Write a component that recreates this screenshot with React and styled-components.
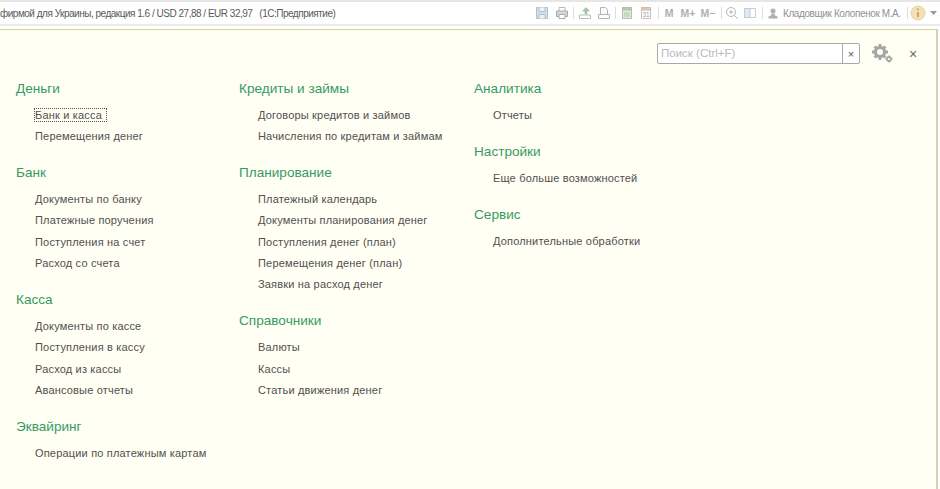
import React from "react";
import styled, { createGlobalStyle } from "styled-components";

const GlobalStyle = createGlobalStyle`
  html, body {
    margin: 0;
    padding: 0;
    background: #fff;
  }
  #root {
    width: 940px;
    height: 489px;
    overflow: hidden;
  }
`;

const Page = styled.div`
  width: 940px;
  height: 489px;
  display: flex;
  flex-direction: column;
  font-family: "Liberation Sans", Arial, sans-serif;
  background: #fff;
`;

const TitleBar = styled.div`
  flex: none;
  padding-bottom: 3px;
  background: #fff;
`;

const TitleRow = styled.div`
  height: 26px;
  display: flex;
  align-items: center;
  box-sizing: border-box;
  background: #fff;
  border-top: 2px solid #e6e6e6;
  border-bottom: 2px solid #ececec;
`;

const TitleText = styled.div`
  flex: 1;
  font-size: 10px;
  letter-spacing: -0.49px;
  color: #5a5a5a;
  white-space: nowrap;
  overflow: hidden;
`;

const Tools = styled.div`
  display: flex;
  align-items: center;
  flex: none;
  padding-right: 3px;
`;

const Slot = styled.span`
  display: flex;
  justify-content: center;
  flex: none;
  margin-left: ${(p) => p.$ml}px;
  width: ${(p) => p.$w || 14}px;
`;

const Sep = styled.span`
  flex: none;
  width: 1px;
  height: 12px;
  margin-left: ${(p) => p.$ml}px;
  background: #dcdcdc;
`;

const MemBtn = styled(Slot)`
  font-size: 10.5px;
  font-weight: bold;
  color: #b0b0b0;
`;

const UserName = styled(Slot)`
  font-size: 10px;
  letter-spacing: -0.4px;
  color: #929292;
  white-space: nowrap;
  justify-content: flex-start;
`;

const Main = styled.div`
  flex: 1;
  position: relative;
  border-top: 1px solid #d9cf98;
  border-right: 2px solid #d4d4b4;
  margin-right: 2px;
  padding-top: 48.5px;
  display: flex;
  background: #fffff3;
  min-height: 0;
`;

const SearchRow = styled.div`
  position: absolute;
  top: 13px;
  left: 657px;
  display: flex;
  align-items: center;
`;

const SearchBox = styled.div`
  width: 203px;
  height: 21px;
  display: flex;
  box-sizing: border-box;
  border: 1px solid #a9a9a9;
  border-radius: 2px;
  background: #fff;
`;

const SearchInput = styled.div`
  flex: 1;
  font-size: 11.5px;
  line-height: 19px;
  padding-left: 3px;
  color: #bababa;
`;

const SearchClear = styled.div`
  width: 16px;
  border-left: 1px solid #a9a9a9;
  display: flex;
  align-items: center;
  justify-content: center;
  font-size: 11px;
  color: #555;
`;

const GearWrap = styled.div`
  margin-left: 12px;
  width: 22px;
  height: 20px;
`;

const CloseX = styled.div`
  margin-left: 15px;
  font-size: 14px;
  color: #666;
`;

const Column = styled.div`
  width: ${(p) => p.$w}px;
  padding-left: ${(p) => p.$pl}px;
  box-sizing: border-box;
  flex: none;
`;

const Section = styled.div`
  margin-bottom: 16px;
`;

const Heading = styled.div`
  font-size: 13.6px;
  line-height: 20px;
  color: #379a63;
  margin-bottom: 6px;
`;

const Item = styled.div`
  font-size: 11px;
  line-height: 21.25px;
  color: #505050;
  padding-left: 19px;
  white-space: nowrap;
  letter-spacing: 0.18px;
`;

const Focused = styled.span`
  outline: 1px dotted #555;
  padding-right: 4px;
`;

const columns = [
  {
    w: 238,
    pl: 16,
    sections: [
      { title: "Деньги", items: ["Банк и касса", "Перемещения денег"] },
      { title: "Банк", items: ["Документы по банку", "Платежные поручения", "Поступления на счет", "Расход со счета"] },
      { title: "Касса", items: ["Документы по кассе", "Поступления в кассу", "Расход из кассы", "Авансовые отчеты"] },
      { title: "Эквайринг", items: ["Операции по платежным картам"] },
    ],
  },
  {
    w: 235,
    pl: 1,
    sections: [
      { title: "Кредиты и займы", items: ["Договоры кредитов и займов", "Начисления по кредитам и займам"] },
      { title: "Планирование", items: ["Платежный календарь", "Документы планирования денег", "Поступления денег (план)", "Перемещения денег (план)", "Заявки на расход денег"] },
      { title: "Справочники", items: ["Валюты", "Кассы", "Статьи движения денег"] },
    ],
  },
  {
    w: 200,
    pl: 1,
    sections: [
      { title: "Аналитика", items: ["Отчеты"] },
      { title: "Настройки", items: ["Еще больше возможностей"] },
      { title: "Сервис", items: ["Дополнительные обработки"] },
    ],
  },
];

const Icon = ({ children }) => (
  <svg width="14" height="14" viewBox="0 0 14 14" fill="none" stroke="#b4b4b4" strokeWidth="1">
    {children}
  </svg>
);

const Gear = () => (
  <svg width="22" height="20" viewBox="0 0 22 20" fill="#a6a6a6">
    <circle cx="8" cy="8" r="4.6" fill="none" stroke="#a6a6a6" strokeWidth="3.2" />
    <path d="M6.600 0h2.800v3H6.600zM6.600 13h2.800v3H6.600zM0 6.600h3v2.800H0zM13 6.600h3v2.800h-3zM1.500 3.500l2-2 2 2-2 2zM10.500 3.500l2-2 2 2-2 2zM1.500 12.500l2 2 2-2-2-2zM10.500 12.500l2 2 2-2-2-2z" />
    <circle cx="17" cy="15" r="2" fill="none" stroke="#a6a6a6" strokeWidth="1.800" />
    <path d="M16.200 11.500h1.600v1.400h-1.600zM16.200 17.100h1.600v1.400h-1.600zM13.500 14.200h1.400v1.600h-1.400zM19.100 14.200h1.400v1.600h-1.400z" />
  </svg>
);

export default function App() {
  return (
    <Page>
      <GlobalStyle />
      <TitleBar>
        <TitleRow>
          <TitleText>фирмой для Украины, редакция 1.6 / USD 27,88 / EUR 32,97 &nbsp; (1С:Предприятие)</TitleText>
          <Tools>
            <Slot $ml={0}>
              <Icon>
                <path d="M1.500 1.500h11v11h-11z" fill="#d2dde5" stroke="#b0c2d0" />
                <path d="M4 1.500v4h6v-4M4 12.500V8.500h6v4" fill="#eef2f5" stroke="#b0c2d0" />
              </Icon>
            </Slot>
            <Slot $ml={6}>
              <Icon>
                <path d="M4 5V1.500h6V5" stroke="#b8b8b8" />
                <path d="M1.500 5h11v5.500h-11z" fill="#d4d7da" stroke="#ababab" />
                <path d="M4 8.500h6v4H4z" fill="#fff" stroke="#ababab" />
              </Icon>
            </Slot>
            <Sep $ml={4} />
            <Slot $ml={4}>
              <Icon>
                <path d="M1.500 9h11v3.500h-11z" stroke="#bcbcbc" />
                <path d="M7 8V5H4.500L8 1.500 11.500 5H9v3z" fill="#9cc79c" stroke="#94b894" strokeWidth="0.5" />
              </Icon>
            </Slot>
            <Slot $ml={5}>
              <Icon>
                <path d="M3.500 1.500h5l2 2v5h-7z" fill="#fafafa" />
                <path d="M1.500 8.500h11v4h-11z" />
              </Icon>
            </Slot>
            <Sep $ml={4} />
            <Slot $ml={4}>
              <Icon>
                <path d="M2.500 1.500h9v11h-9z" fill="#e4ecdf" stroke="#adc3a6" />
                <path d="M2.500 1.500h9v2.500h-9z" fill="#b2cba7" stroke="#adc3a6" />
                <path d="M5 6v5M7 6v5M9 6v5" stroke="#adc3a6" />
              </Icon>
            </Slot>
            <Slot $ml={5}>
              <Icon>
                <path d="M2.500 1.500h9v11h-9z" fill="#fff" stroke="#c8c0b6" />
                <path d="M2.500 1.500h9v2.500h-9z" fill="#e0cbb2" stroke="#cfbca6" />
                <text x="7" y="11" fontSize="6.500" textAnchor="middle" fill="#a0a0a0" stroke="none" fontFamily="Liberation Sans">31</text>
              </Icon>
            </Slot>
            <Sep $ml={5} />
            <MemBtn $ml={5} $w={10}>M</MemBtn>
            <MemBtn $ml={6} $w={16}>M+</MemBtn>
            <MemBtn $ml={4} $w={16}>M−</MemBtn>
            <Sep $ml={5} />
            <Slot $ml={3}>
              <Icon>
                <circle cx="6" cy="6" r="4.500" />
                <path d="M9.500 9.500L13 13M4 6h4M6 4v4" />
              </Icon>
            </Slot>
            <Slot $ml={4}>
              <Icon>
                <path d="M1.500 2.500h11v9h-11z" stroke="#c4ccd4" />
                <path d="M1.500 2.500H7v9H1.500z" fill="#e2eaf1" stroke="#c4ccd4" />
              </Icon>
            </Slot>
            <Sep $ml={5} />
            <Slot $ml={5} $w={10}>
              <svg width="10" height="11" viewBox="0 0 10 11" fill="#b0b0b0">
                <circle cx="5" cy="3" r="2.500" />
                <path d="M3.500 5.500h3l.5 2 2.500 1v2H.5v-2l2.500-1z" />
              </svg>
            </Slot>
            <UserName $ml={5} $w={117}>Кладовщик Колопенок М.А.</UserName>
            <Sep $ml={7} />
            <Slot $ml={2} $w={16}>
              <svg width="16" height="16" viewBox="0 0 16 16">
                <circle cx="8" cy="8" r="7" fill="#f5dfb4" stroke="#e6d2a4" />
                <path d="M8 3.500v1.800M8 7v5" stroke="#b8974f" strokeWidth="1.500" />
              </svg>
            </Slot>
            <Slot $ml={4} $w={7}>
              <svg width="7" height="4" viewBox="0 0 7 4"><path d="M0 0h7L3.500 4z" fill="#999" /></svg>
            </Slot>
          </Tools>
        </TitleRow>
      </TitleBar>
      <Main>
        <SearchRow>
          <SearchBox>
            <SearchInput>Поиск (Ctrl+F)</SearchInput>
            <SearchClear>×</SearchClear>
          </SearchBox>
          <GearWrap><Gear /></GearWrap>
          <CloseX>×</CloseX>
        </SearchRow>
        {columns.map((col) => (
          <Column key={col.sections[0].title} $w={col.w} $pl={col.pl}>
            {col.sections.map((s) => (
              <Section key={s.title}>
                <Heading>{s.title}</Heading>
                {s.items.map((it) => (
                  <Item key={it}>{it === "Банк и касса" ? <Focused>{it}</Focused> : it}</Item>
                ))}
              </Section>
            ))}
          </Column>
        ))}
      </Main>
    </Page>
  );
}
